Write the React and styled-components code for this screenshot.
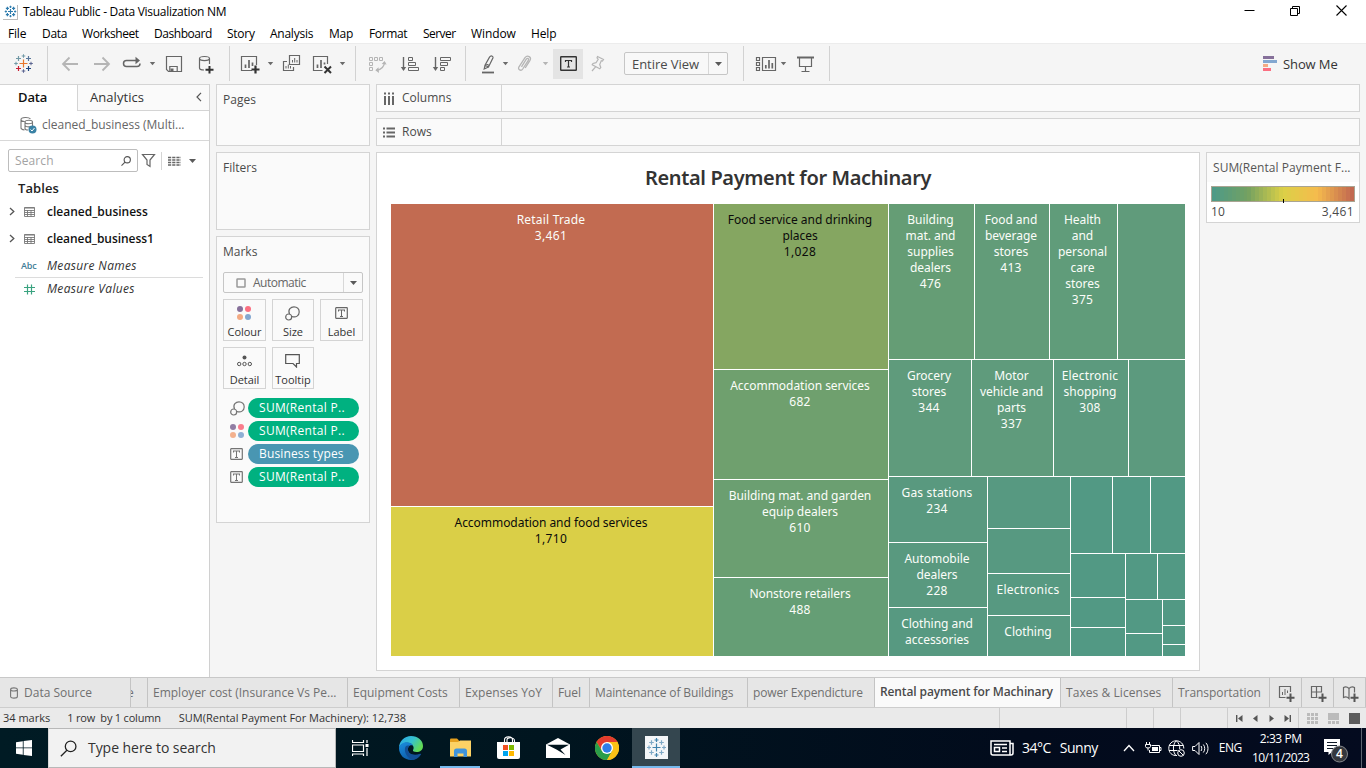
import React from 'react';
import styled, { createGlobalStyle, css } from 'styled-components';

const ui = '"Open Sans", "Noto Sans", sans-serif';
const chartFont = '"Noto Sans", "Open Sans", sans-serif';

const Global = createGlobalStyle`
  * { box-sizing: border-box; }
  body { margin: 0; background: #f5f5f5; font-family: ${ui}; font-size: 12px; color: #333; overflow: hidden; }
  svg { display: block; flex: none; }
`;

const Window = styled.div`
  width: 1366px;
  height: 768px;
  display: flex;
  flex-direction: column;
  overflow: hidden;
`;

const Text = styled.span`
  flex: none;
  white-space: pre;
  line-height: 16px;
  font-size: ${p => p.$size || 12}px;
  font-weight: ${p => (p.$bold ? 600 : 400)};
  font-style: ${p => (p.$italic ? 'italic' : 'normal')};
  letter-spacing: ${p => p.$ls || 0}px;
  color: ${p => p.$color || '#4a4a4a'};
  margin-left: ${p => p.$ml || 0}px;
`;

const Svg = ({ w, h, children, ...rest }) => (
  <svg width={w} height={h} viewBox={`0 0 ${w} ${h}`} fill="none" {...rest}>{children}</svg>
);

/* ---------- logo ---------- */
const plus = (x, y, r) => `M${x - r} ${y}H${x + r}M${x} ${y - r}V${y + r}`;
const brand = ['#e8762c', '#7199a6', '#5c6692', '#7199a6', '#5c6692', '#7199a6', '#59779b', '#c72035', '#1f447e'];
const Logo = ({ size = 21, colors = brand, weight = 1.2 }) => (
  <svg width={size} height={size} viewBox="0 0 21 21" fill="none">
    {[[10.5, 10.5, 4], [10.5, 3, 1.8], [18, 10.5, 1.8], [3, 10.5, 1.8], [10.5, 18, 1.8],
      [5.5, 5.5, 2.5], [15.5, 5.5, 2.5], [5.5, 15.5, 2.5], [15.5, 15.5, 2.5]].map(([x, y, r], i) => (
      <path key={i} d={plus(x, y, r)} stroke={colors[i % colors.length]} strokeWidth={i && i < 5 ? weight * 0.85 : weight} />
    ))}
  </svg>
);

/* ---------- title bar and menu ---------- */
const TitleBar = styled.div`
  height: 24px;
  background: #fff;
  display: flex;
  align-items: center;
  padding-left: 3px;
`;
const AppIcon = styled.div`
  width: 15px;
  height: 15px;
  display: flex;
  align-items: center;
  justify-content: center;
  border-right: 1px solid #bbb;
  border-bottom: 1px solid #bbb;
  margin-right: 5px;
`;
const Controls = styled.div`
  margin-left: auto;
  padding-right: 19px;
  display: flex;
  gap: 35px;
  margin-top: -4px;
`;
const MenuBar = styled.div`
  height: 19px;
  background: #fff;
  display: flex;
  align-items: center;
  padding: 1px 0 0 8px;
`;
const MenuItem = styled.div`
  width: ${p => p.$w}px;
  font-size: 12px;
  line-height: 18px;
  letter-spacing: ${p => p.$ls}px;
  color: #000;
  white-space: nowrap;
`;
const menus = [['File', 34, -0.2], ['Data', 40, -0.3], ['Worksheet', 72, -0.4], ['Dashboard', 73, -0.45], ['Story', 43, -0.25], ['Analysis', 59, -0.25],
  ['Map', 40, -0.2], ['Format', 54, -0.35], ['Server', 48, -0.55], ['Window', 60, -0.1], ['Help', 40, -0.15]];

/* ---------- toolbar ---------- */
const Toolbar = styled.div`
  height: 41px;
  background: #f5f5f5;
  border-top: 1px solid #ececec;
  padding-bottom: 1px;
  display: flex;
  align-items: center;
`;
const Tool = styled.div`
  flex: none;
  margin-left: ${p => p.$ml}px;
`;
const Sep = styled.div`
  flex: none;
  width: 1px;
  height: 35px;
  background: #d2d2d2;
  margin-left: ${p => p.$ml}px;
`;
const LabelButton = styled.div`
  width: 30px;
  height: 30px;
  margin-left: 4px;
  background: #e4e4e4;
  display: flex;
  align-items: center;
  justify-content: center;
`;
const Select = styled.div`
  width: ${p => p.$w}px;
  height: ${p => p.$h}px;
  border: 1px solid #c6c6c6;
  border-radius: 2px;
  background: ${p => p.$bg || '#f8f8f8'};
  display: flex;
  align-items: stretch;
  margin-left: ${p => p.$ml || 0}px;
  margin-top: ${p => p.$mt || 0}px;
  flex: none;
`;
const SelectValue = styled.div`
  flex: 1;
  display: flex;
  align-items: center;
  padding-left: ${p => p.$pl}px;
`;
const SelectArrow = styled.div`
  width: 19px;
  border-left: 1px solid #d8d8d8;
  display: flex;
  align-items: center;
  justify-content: center;
`;
const Caret = ({ ml, color = '#6b6b6b' }) => (
  <Tool $ml={ml}><Svg w={7} h={21}><path d="M.8 9H6.2L3.5 12.2Z" fill={color} /></Svg></Tool>
);
const DownArrow = () => <Svg w={7} h={4}><path d="M0 0H7L3.5 4Z" fill="#5a5a5a" /></Svg>;

const dark = '#666';
const pale = '#b5b5b5';

const Back = () => <Svg w={18} h={21}><path d="M17 11H2M8.5 4.500L2 11L8.500 17.500" stroke={pale} strokeWidth="1.800" /></Svg>;
const Forward = () => <Svg w={18} h={21}><path d="M1 11H16M9.500 4.500L16 11L9.500 17.500" stroke={pale} strokeWidth="1.800" /></Svg>;
const Replay = () => (
  <Svg w={20} h={21}>
    <path d="M4.500 7.500C2.500 7.500 1.500 9 1.500 10.500C1.500 12.300 2.800 13.500 4.500 13.500H15C17 13.500 18 12 18 10.500M4.500 7.500H14" stroke={dark} strokeWidth="1.500" />
    <path d="M13.500 3.800V11.200L18 7.500Z" fill={dark} />
  </Svg>
);
const Save = () => (
  <Svg w={18} h={21}>
    <path d="M1.500 3.500H16.500V18.500H3.500L1.500 16.500ZM4.800 18.500V13.500H12.200V18.500" stroke={dark} strokeWidth="1.200" />
    <path d="M5.500 15.500H8.500V18.500H5.500Z" fill={dark} />
  </Svg>
);
const Database = () => (
  <Svg w={17} h={21}>
    <path d="M11.500 11V5.500M1.500 5.500V15C1.500 16.500 3.500 17 6 17M1.500 5.500C1.500 2.800 11.500 2.800 11.500 5.500S1.500 8.200 1.500 5.500" stroke={dark} strokeWidth="1.200" />
    <path d="M11.500 13V20.500M7.500 16.700H15.500" stroke="#333" strokeWidth="2" />
  </Svg>
);
const NewSheet = () => (
  <Svg w={21} h={21}>
    <path d="M12 17.500H1.500V3.500H16.500V12" stroke={dark} strokeWidth="1.200" />
    <path d="M5.500 15V11.500M9 15V7M12.500 13V9.500" stroke={dark} strokeWidth="1.700" />
    <path d="M15.500 12.500V20.500M11.500 16.500H19.500" stroke="#333" strokeWidth="2.200" />
  </Svg>
);
const Duplicate = () => (
  <Svg w={19} h={21}>
    <path d="M7.500 2.500H17.500V11.500H7.500ZM5 8.500H1.500V17.500H11.500V14" stroke={dark} strokeWidth="1.200" />
    <path d="M10.500 9.500V7M12.700 9.500V5M15 9.500V7M4 15.500V13M6.300 15.500V11.500M8.500 15.500V13" stroke={dark} />
  </Svg>
);
const ClearSheet = () => (
  <Svg w={21} h={21}>
    <path d="M10.500 17.500H1.500V3.500H15.500V11" stroke={dark} strokeWidth="1.200" />
    <path d="M5.500 15V11.500M9 15V7M12.500 11.500V9.500" stroke={dark} strokeWidth="1.700" />
    <path d="M12.500 13.500L19 20M19 13.500L12.500 20" stroke="#333" strokeWidth="2" />
  </Svg>
);
const Swap = () => (
  <Svg w={19} h={21} stroke={pale}>
    <path d="M1.500 4.500H4.500V7.500H1.500ZM6.500 4.500H9.500V7.500H6.500ZM11.500 4.500H14.500V7.500H11.500ZM1.500 9.500H4.500V12.500H1.500ZM1.500 14.500H4.500V17.500H1.500Z" />
    <path d="M16.500 9C16.500 13 13.500 17 8.500 17.300" strokeWidth="1.300" />
    <path d="M13.700 11L16.600 8L18.600 11.500ZM10.500 14.300L7.300 17.300L11 20Z" fill={pale} stroke="none" />
  </Svg>
);
const SortAsc = () => (
  <Svg w={20} h={21} stroke={dark}>
    <path d="M3.500 4V16" strokeWidth="1.400" /><path d="M.8 14H6.200L3.500 18Z" fill={dark} stroke="none" />
    <path d="M8.500 4.500H12.500V7.500H8.500ZM8.500 9.500H15.500V12.500H8.500ZM8.500 14.500H18.500V17.500H8.500Z" />
  </Svg>
);
const SortDesc = () => (
  <Svg w={20} h={21} stroke={dark}>
    <path d="M3.500 4V16" strokeWidth="1.400" /><path d="M.8 14H6.200L3.500 18Z" fill={dark} stroke="none" />
    <path d="M8.500 4.500H18.500V7.500H8.500ZM8.500 9.500H15.500V12.500H8.500ZM8.500 14.500H12.500V17.500H8.500Z" />
  </Svg>
);
const Highlighter = () => (
  <Svg w={14} h={21}>
    <path d="M9.500 3.200C10.500 2.500 12.300 3.500 12 4.700L7.500 14L4 12.300L8.500 4.200ZM4 12.300L3.200 16L7.500 14M4.800 10.800L8.300 12.500" stroke={dark} strokeWidth="1.200" />
    <path d="M1 19.500H13" stroke={dark} strokeWidth="1.800" />
  </Svg>
);
const Clip = () => (
  <Svg w={15} h={21}>
    <path d="M4.500 13.800L9.300 6.200C10.500 4.500 12.300 5.700 11.300 7.300L5.700 16C4 18.500 .5 16.500 2 13.800L8 4.700C10.500 1.500 14.800 4 13 7.300L8.200 15" stroke={pale} strokeWidth="1.300" />
  </Svg>
);
const LabelIcon = ({ w = 17, h = 15, color = '#333', weight = 1.4 }) => (
  <Svg w={w} h={h} stroke={color}>
    <rect x=".7" y=".7" width={w - 1.4} height={h - 1.4} rx=".5" strokeWidth={weight} />
    <path d={`M${w / 2 - 3} ${h / 2 - 1.5}V${h / 2 - 3}H${w / 2 + 3}V${h / 2 - 1.5}M${w / 2} ${h / 2 - 3}V${h / 2 + 3.5}M${w / 2 - 1.5} ${h / 2 + 3.5}H${w / 2 + 1.5}`} strokeWidth={weight * 0.85} />
  </Svg>
);
const Pin = () => (
  <Svg w={15} h={21}>
    <path d="M7.500 3.500L13.500 6.500L12.500 8L11.300 7.700L9.700 11.500L10.800 14.500L9.800 15.800L2.200 11.800L3 10.500L6 9.700L8.200 6.200L7 4.800ZM5.800 13.700L2 18" stroke={pale} strokeWidth="1.200" />
  </Svg>
);
const Cards = () => (
  <Svg w={22} h={21} stroke={dark}>
    <path d="M1.500 4.500H4.500V7.500H1.500ZM1.500 9.500H4.500V12.500H1.500ZM1.500 14.500H4.500V17.500H1.500ZM7.500 4.500H20.500V17.500H7.500Z" strokeWidth="1.200" />
    <path d="M10.800 15.500V12M14 15.500V7M17.300 15.500V10" strokeWidth="1.700" />
  </Svg>
);
const Present = () => (
  <Svg w={19} h={21} stroke={dark}>
    <path d="M1 4.500H18" strokeWidth="2" /><path d="M3.500 5V13.500H15.500V5M9.500 13.500V18M5.500 18.500H13.500" strokeWidth="1.200" />
  </Svg>
);
const ShowMeIcon = () => (
  <Svg w={15} h={15}>
    <path d="M0 0H11V3H0Z" fill="#86709a" /><path d="M0 4H14V7H0Z" fill="#83a7d0" />
    <path d="M0 8H5V11H0Z" fill="#f3aa83" /><path d="M0 12H8V15H0Z" fill="#fb6f81" />
  </Svg>
);

/* ---------- body ---------- */
const Body = styled.div`
  height: 593px;
  display: flex;
  background: #f5f5f5;
`;
const DataPane = styled.div`
  width: 210px;
  background: #fff;
  border-right: 1px solid #d0d0d0;
  border-top: 1px solid #d4d4d4;
  margin-right: 6px;
`;
const PaneTabs = styled.div`
  height: 26px;
  display: flex;
`;
const PaneTab = styled.div`
  display: flex;
  align-items: center;
  width: ${p => p.$w}px;
  padding: 0 7px ${p => (p.$active ? 2 : 1)}px ${p => p.$pl}px;
  ${p => !p.$active && css`
    background: #fafafa;
    border-left: 1px solid #d4d4d4;
    border-bottom: 1px solid #d4d4d4;
    justify-content: space-between;
  `}
`;
const SourceRow = styled.div`
  height: 30px;
  padding: 0 0 1px 20px;
  border-bottom: 1px solid #d8d8d8;
  display: flex;
  align-items: center;
`;
const SearchRow = styled.div`
  height: 39px;
  display: flex;
  align-items: center;
  padding-left: 8px;
`;
const SearchBox = styled.div`
  width: 130px;
  height: 23px;
  border: 1px solid #bdbdbd;
  border-radius: 2px;
  display: flex;
  align-items: center;
  justify-content: space-between;
  padding: 0 6px 0 6px;
  margin-right: 3px;
`;
const Divider = styled.div`
  width: 1px;
  height: 18px;
  background: #d4d4d4;
  margin: 0 6px 0 5px;
`;
const ListOptions = styled.div`
  display: flex;
  align-items: center;
  gap: 8px;
`;
const TablesHeading = styled.div`
  height: 18px;
  padding-left: 18px;
`;
const FieldRow = styled.div`
  height: ${p => p.$h}px;
  margin: 0 6px 0 ${p => p.$ml}px;
  padding-top: ${p => p.$pt || 0}px;
  display: flex;
  align-items: center;
  ${p => p.$line && css`border-bottom: 1px solid #dcdcdc;`}
`;
const FieldIcon = styled.div`
  width: ${p => p.$w}px;
  flex: none;
  display: flex;
`;

const Shelves = styled.div`
  width: 154px;
  margin-right: 6px;
  display: flex;
  flex-direction: column;
  gap: 6px;
`;
const Card = styled.div`
  height: ${p => p.$h}px;
  border: 1px solid #d4d4d4;
  background: #fafafa;
  padding: 6px 6px 0;
`;
const MarkGrid = styled.div`
  display: grid;
  grid-template-columns: 43px 42px 43px;
  grid-auto-rows: 42px;
  gap: 6px;
  margin-top: 6px;
`;
const MarkButton = styled.div`
  border: 1px solid #d4d4d4;
  background: #fafafa;
  display: flex;
  flex-direction: column;
  align-items: center;
`;
const MarkGlyph = styled.div`
  height: 24px;
  padding: 2px 1px 0 0;
  display: flex;
  align-items: center;
`;
const Pills = styled.div`
  margin-top: 9px;
  display: flex;
  flex-direction: column;
  gap: 3px;
`;
const PillRow = styled.div`
  height: 20px;
  padding-left: 7px;
  display: flex;
  align-items: center;
`;
const PillIcon = styled.div`
  width: 18px;
  opacity: .9;
`;
const Pill = styled.div`
  width: 111px;
  height: 20px;
  border-radius: 10px;
  background: ${p => p.$bg};
  padding-left: 11px;
  display: flex;
  align-items: center;
`;

const Main = styled.div`
  width: 984px;
  display: flex;
  flex-direction: column;
  gap: 6px;
`;
const Shelf = styled.div`
  height: 28px;
  border: 1px solid #d4d4d4;
  background: #fafafa;
  display: flex;
`;
const ShelfLabel = styled.div`
  width: 125px;
  border-right: 1px solid #d4d4d4;
  padding-left: 6px;
  display: flex;
  align-items: center;
`;
const ViewRow = styled.div`
  display: flex;
  gap: 6px;
  align-items: flex-start;
`;
const Sheet = styled.div`
  width: 824px;
  height: 519px;
  background: #fff;
  border: 1px solid #d4d4d4;
  padding-left: 14px;
`;
const SheetTitle = styled.div`
  width: 794px;
  height: 51px;
  font: 600 20px/50px ${chartFont};
  letter-spacing: -.37px;
  color: #333;
  text-align: center;
`;
const Split = styled.div`
  display: flex;
  flex-direction: ${p => (p.$col ? 'column' : 'row')};
  gap: 1px;
  flex: none;
  ${p => p.$w && css`width: ${p.$w}px;`}
  ${p => p.$h && css`height: ${p.$h}px;`}
`;
const Cell = styled.div`
  flex: none;
  width: ${p => (p.$w ? p.$w + 'px' : 'auto')};
  height: ${p => (p.$h ? p.$h + 'px' : 'auto')};
  background: ${p => p.$bg};
  color: ${p => (p.$dark ? '#0b0b0b' : '#fbfdf9')};
  padding: 8px 2px 0 0;
  font: 12px/16px ${chartFont};
  text-align: center;
  white-space: nowrap;
`;
const Line = styled.div`
  letter-spacing: ${p => p.$ls}px;
`;
const spacing = { 'Retail Trade': 0.2, 'Electronics': 0.2, 'Electronic': 0.15, 'Gas stations': 0.15 };
const Block = ({ lines = [], ...rest }) => (
  <Cell {...rest}>
    {lines.map((l, i) => <Line key={i} $ls={spacing[l] !== undefined ? spacing[l] : /^\d/.test(l) ? 0.35 : -0.04}>{l}</Line>)}
  </Cell>
);

const Legend = styled.div`
  width: 154px;
  height: 71px;
  background: #fff;
  border: 1px solid #d4d4d4;
`;
const LegendTitle = styled.div`
  height: 29px;
  background: #fafafa;
  padding: 6px 0 0 6px;
`;
const Ramp = styled.div`
  width: 144px;
  height: 16px;
  margin: 4px 0 0 4px;
  border: 1px solid #a9a492;
  display: flex;
  position: relative;
`;
const Step = styled.div`
  flex: 1;
`;
const Tick = styled.div`
  position: absolute;
  left: 71px;
  top: 12px;
  width: 1px;
  height: 4px;
  background: #000;
`;
const LegendRange = styled.div`
  display: flex;
  justify-content: space-between;
  padding: 2px 5px 0 4px;
`;
const rampStops = [[78, 154, 134], [116, 161, 97], [220, 208, 71], [245, 187, 77], [194, 105, 80]];
const rampColor = t => {
  const s = Math.min(3, Math.floor(t * 4));
  const k = t * 4 - s;
  return `rgb(${rampStops[s].map((v, i) => Math.round(v + (rampStops[s + 1][i] - v) * k)).join(',')})`;
};

/* small icons */
const SourceIcon = () => (
  <Svg w={17} h={18}>
    <path d="M1 3.500V12C1 13 2.500 13.700 4.500 14M1 3.500C1 1 9 1 10.500 3M1 3.500C1 5 3 5.500 4.500 5.500M12.500 10.500V6C12.500 3.700 5 3.700 5 6S12.500 8.300 12.500 6M5 6V12.500C5 13.500 6.500 14 8 14M5 9.500C6 10.700 9 11 11 10.500" stroke="#777" strokeWidth="1.100" />
    <circle cx="12.500" cy="13.500" r="4" fill="#3a82a5" /><path d="M10.500 13.500L12 15L14.500 12" stroke="#fff" />
  </Svg>
);
const Search = ({ size, color, weight }) => (
  <svg width={size} height={size} viewBox="0 0 16 16" fill="none" stroke={color} strokeWidth={weight}>
    <circle cx="10" cy="6" r="5" /><path d="M6.500 9.700L.8 15.300" />
  </svg>
);
const TableIcon = () => (
  <Svg w={11} h={10}><path d="M.5 .5H10.500V9.500H.5ZM.5 3.500H10.500M.5 5.500H10.500M.5 7.500H10.500M3.500 3V9.500M7 3V9.500" stroke="#777" strokeWidth=".9" /><path d="M.5 1H10.500" stroke="#777" /></Svg>
);
const Chevron = () => <Svg w={6} h={9}><path d="M1 1L4.800 4.500L1 8" stroke="#555" strokeWidth="1.300" /></Svg>;
const Dots = () => (
  <Svg w={14} h={14}><circle cx="3" cy="3" r="3" fill="#86709a" /><circle cx="11" cy="3" r="3" fill="#fb6f81" /><circle cx="3" cy="11" r="3" fill="#f3aa83" /><circle cx="11" cy="11" r="3" fill="#83a7d0" /></Svg>
);
const SizeIcon = () => (
  <Svg w={15} h={15} stroke="#666" strokeWidth="1.200"><path d="M4.500 8C2.500 3.500 6 .8 9 .8C12 .8 14.200 3 14.200 6C14.200 9.500 11 12 7 10.500" /><circle cx="3.700" cy="11" r="3" /></Svg>
);
const DetailIcon = () => (
  <Svg w={15} h={12}><circle cx="7.500" cy="2.500" r="2" fill="#555" /><circle cx="2.200" cy="9" r="1.700" stroke="#555" /><circle cx="7.500" cy="9" r="1.700" stroke="#555" /><circle cx="12.800" cy="9" r="1.700" stroke="#555" /></Svg>
);
const TooltipIcon = () => <Svg w={15} h={14}><path d="M.7 .7H14.300V9.500H11.500V13L8 9.500H.7Z" stroke="#555" strokeWidth="1.200" /></Svg>;
const SmallLabel = () => <LabelIcon w={13} h={12} color="#666" weight={1.2} />;

const markButtons = [['Colour', Dots], ['Size', SizeIcon], ['Label', SmallLabel], ['Detail', DetailIcon], ['Tooltip', TooltipIcon]];
const pills = [['SUM(Rental P..', SizeIcon, '#00b180', 0.3], ['SUM(Rental P..', Dots, '#00b180', 0.3], ['Business types', SmallLabel, '#4996b2', 0.15], ['SUM(Rental P..', SmallLabel, '#00b180', 0.3]];

/* ---------- sheet tabs & status ---------- */
const TabBar = styled.div`
  height: 31px;
  background: #e6e6e6;
  border-top: 1px solid #c8c8c8;
  border-bottom: 1px solid #cdcdcd;
  display: flex;
`;
const SheetTab = styled.div`
  flex: none;
  width: ${p => p.$w}px;
  border-right: 1px solid #c4c4c4;
  padding: ${p => (p.$active ? '0 0 2px' : '1px 0 0')};
  padding-left: ${p => (p.$pl === undefined ? 5 : p.$pl)}px;
  background: ${p => (p.$active ? '#fafafa' : '#e6e6e6')};
  display: flex;
  align-items: center;
  overflow: hidden;
`;
const StatusBar = styled.div`
  height: 20px;
  background: #eaeaea;
  display: flex;
  align-items: center;
  padding-left: 3px;
`;
const StatusCells = styled.div`
  margin-left: auto;
  display: flex;
  height: 20px;
`;
const StatusCell = styled.div`
  width: ${p => p.$w}px;
  border-left: 1px solid #cdcdcd;
  display: flex;
  align-items: center;
  justify-content: space-between;
  padding: 0 ${p => p.$pr || 0}px 0 ${p => p.$pl || 0}px;
`;
const tabs = [['Employer cost (Insurance Vs Pe...', 200, 0], ['Equipment Costs', 112, 0], ['Expenses YoY', 93, 0.05], ['Fuel', 37, -0.1], ['Maintenance of Buildings', 158, -0.13],
  ['power Expendicture', 127, -0.14], ['Rental payment for Machinary', 186, -0.12, true], ['Taxes & Licenses', 112, 0.06], ['Transportation', 97, -0.05]];

/* ---------- taskbar ---------- */
const Taskbar = styled.div`
  height: 40px;
  background: linear-gradient(90deg, #001b24 0, #00151f 40%, #020b1c 75%, #040b1f 100%);
  display: flex;
  color: #fff;
`;
const TaskCell = styled.div`
  flex: none;
  width: ${p => p.$w}px;
  display: flex;
  align-items: center;
  justify-content: center;
  background: ${p => (p.$active ? '#34464f' : 'transparent')};
`;
const Running = styled.div`
  width: ${p => p.$w}px;
  height: 40px;
  border-bottom: 2px solid #76b9ed;
  padding-top: 1px;
  display: flex;
  align-items: center;
  justify-content: center;
`;
const TaskSearch = styled.div`
  width: 288px;
  background: #f2f2f2;
  border: 1px solid #b8b8b8;
  border-left-color: #d8d8d8;
  display: flex;
  align-items: center;
  padding-left: 11px;
`;
const Tray = styled.div`
  margin-left: auto;
  width: 376px;
  display: flex;
  align-items: center;
`;
const TrayIcon = styled.div`
  flex: none;
  margin-left: ${p => p.$ml}px;
  margin-top: ${p => p.$mt || 0}px;
`;
const Clock = styled.div`
  width: 58px;
  margin-left: 10px;
  display: flex;
  flex-direction: column;
  align-items: center;
  gap: 3px;
`;
const ShowDesktop = styled.div`
  width: 1px;
  height: 40px;
  background: #5c6470;
  margin-left: 12px;
`;

const AddPlus = <path d="M12.500 9.500V18M8.500 13.700H16.500" stroke="#555" strokeWidth="2" />;

export default function App() {
  const red = '#c26b51', g1 = '#5f9b7c', g2 = '#5c9a7e', g3 = '#579981', g4 = '#529984';
  return (
    <Window>
      <Global />
      <TitleBar>
        <AppIcon><Logo size={13} colors={['#2f7cae']} weight={1.9} /></AppIcon>
        <Text $ls={-0.28} $color="#000">Tableau Public - Data Visualization NM</Text>
        <Controls>
          <Svg w={11} h={11}><path d="M.5 5.500H10.500" stroke="#000" /></Svg>
          <Svg w={11} h={11}><path d="M.5 3.500H7.500V10.500H.5ZM2.500 3.500V1.500H9.500V8.500H7.500" stroke="#000" /></Svg>
          <Svg w={11} h={11}><path d="M.5 .5L10.500 10.500M10.500 .5L.5 10.500" stroke="#000" strokeWidth="1.100" /></Svg>
        </Controls>
      </TitleBar>
      <MenuBar>{menus.map(([n, w, ls]) => <MenuItem key={n} $w={w} $ls={ls}>{n}</MenuItem>)}</MenuBar>

      <Toolbar>
        <Tool $ml={13}><Logo /></Tool>
        <Sep $ml={13} />
        <Tool $ml={13}><Back /></Tool>
        <Tool $ml={14}><Forward /></Tool>
        <Tool $ml={11}><Replay /></Tool>
        <Caret ml={7} />
        <Tool $ml={9}><Save /></Tool>
        <Tool $ml={15}><Database /></Tool>
        <Sep $ml={14} />
        <Tool $ml={10}><NewSheet /></Tool>
        <Caret ml={6} />
        <Tool $ml={8}><Duplicate /></Tool>
        <Tool $ml={11}><ClearSheet /></Tool>
        <Caret ml={6} />
        <Sep $ml={9} />
        <Tool $ml={12}><Swap /></Tool>
        <Tool $ml={13}><SortAsc /></Tool>
        <Tool $ml={12}><SortDesc /></Tool>
        <Sep $ml={13} />
        <Tool $ml={15}><Highlighter /></Tool>
        <Caret ml={7} />
        <Tool $ml={8}><Clip /></Tool>
        <Caret ml={10} color={pale} />
        <LabelButton><LabelIcon /></LabelButton>
        <Tool $ml={7}><Pin /></Tool>
        <Select $w={104} $h={23} $ml={19}>
          <SelectValue $pl={7}><Text $size={13} $ls={-0.05}>Entire View</Text></SelectValue>
          <SelectArrow><DownArrow /></SelectArrow>
        </Select>
        <Sep $ml={15} />
        <Tool $ml={11}><Cards /></Tool>
        <Caret ml={3} />
        <Tool $ml={9}><Present /></Tool>
        <Sep $ml={14} />
        <Tool $ml={433}><ShowMeIcon /></Tool>
        <Text $ml={5} $size={13} $ls={-0.1} $color="#333">Show Me</Text>
      </Toolbar>

      <Body>
        <DataPane>
          <PaneTabs>
            <PaneTab $active $w={77} $pl={18}><Text $bold $size={13} $ls={-0.15} $color="#111">Data</Text></PaneTab>
            <PaneTab $w={132} $pl={12}>
              <Text $size={13} $color="#333" $ls={0.05}>Analytics</Text>
              <Svg w={6} h={10}><path d="M5 .8L1 5L5 9.200" stroke="#555" strokeWidth="1.200" /></Svg>
            </PaneTab>
          </PaneTabs>
          <SourceRow><SourceIcon /><Text $ml={5} $color="#666">cleaned_business (Multi...</Text></SourceRow>
          <SearchRow>
            <SearchBox><Text $color="#a3a3a3" $ls={0.1}>Search</Text><Search size={10} color="#555" weight={1.8} /></SearchBox>
            <Svg w={15} h={15}><path d="M1.500 1.500H13.500L9 7V13.500L6 11.500V7Z" stroke="#666" strokeWidth="1.200" /></Svg>
            <Divider />
            <ListOptions>
              <Svg w={13} h={10}><path d="M0 1.500H13M0 4H13M0 6.500H13M0 9H13" stroke="#666" strokeWidth="1.300" strokeDasharray="3.200 1" /></Svg>
              <DownArrow />
            </ListOptions>
          </SearchRow>
          <TablesHeading><Text $bold $size={13} $ls={0.1} $color="#222">Tables</Text></TablesHeading>
          <FieldRow $h={27} $ml={9}><FieldIcon $w={15}><Chevron /></FieldIcon><FieldIcon $w={23}><TableIcon /></FieldIcon><Text $bold $color="#111">cleaned_business</Text></FieldRow>
          <FieldRow $h={27} $ml={9}><FieldIcon $w={15}><Chevron /></FieldIcon><FieldIcon $w={23}><TableIcon /></FieldIcon><Text $bold $ls={-0.05} $color="#111">cleaned_business1</Text></FieldRow>
          <FieldRow $h={26} $ml={15} $pt={2} $line><FieldIcon $w={32}><Text $ml={6} $size={9} $bold $color="#3f7d97" $ls={-0.1}>Abc</Text></FieldIcon><Text $italic $color="#333" $ls={0.33}>Measure Names</Text></FieldRow>
          <FieldRow $h={22} $ml={24}>
            <FieldIcon $w={23}><Svg w={11} h={11}><path d="M3.500 .5V10.500M7.500 .5V10.500M0 3.500H11M0 7.500H11" stroke="#3aa380" strokeWidth="1.200" /></Svg></FieldIcon>
            <Text $italic $color="#333" $ls={0.33}>Measure Values</Text>
          </FieldRow>
        </DataPane>

        <Shelves>
          <Card $h={62}><Text>Pages</Text></Card>
          <Card $h={78}><Text>Filters</Text></Card>
          <Card $h={287}>
            <Text>Marks</Text>
            <Select $w={140} $h={21} $bg="#fafafa" $mt={12}>
              <SelectValue $pl={12}>
                <Svg w={10} h={10}><rect x="1" y="1" width="8" height="8" rx=".5" stroke="#999" strokeWidth="1.500" /></Svg>
                <Text $ml={7} $ls={-0.5} $color="#666">Automatic</Text>
              </SelectValue>
              <SelectArrow><DownArrow /></SelectArrow>
            </Select>
            <MarkGrid>
              {markButtons.map(([name, Icon]) => (
                <MarkButton key={name}><MarkGlyph><Icon /></MarkGlyph><Text $size={11} $color="#333" $ls={-0.03}>{name}</Text></MarkButton>
              ))}
            </MarkGrid>
            <Pills>
              {pills.map(([name, Icon, bg, ls], i) => (
                <PillRow key={i}><PillIcon><Icon /></PillIcon><Pill $bg={bg}><Text $color="#fff" $ls={ls}>{name}</Text></Pill></PillRow>
              ))}
            </Pills>
          </Card>
        </Shelves>

        <Main>
          <Shelf><ShelfLabel>
            <Svg w={12} h={13}><path d="M2 4V13M6 4V13M10 4V13M2 .5V2.500M6 .5V2.500M10 .5V2.500" stroke="#666" strokeWidth="2" /></Svg>
            <Text $ml={7}>Columns</Text>
          </ShelfLabel></Shelf>
          <Shelf><ShelfLabel>
            <Svg w={12} h={11}><path d="M3.500 1.500H12M3.500 5.500H12M3.500 9.500H12M0 1.500H2M0 5.500H2M0 9.500H2" stroke="#666" strokeWidth="2" /></Svg>
            <Text $ml={7}>Rows</Text>
          </ShelfLabel></Shelf>
          <ViewRow>
            <Sheet>
              <SheetTitle>Rental Payment for Machinary</SheetTitle>
              <Split>
                <Split $col $w={322}>
                  <Block $h={302} $bg={red} lines={['Retail Trade', '3,461']} />
                  <Block $h={149} $bg="#dacf47" $dark lines={['Accommodation and food services', '1,710']} />
                </Split>
                <Split $col $w={174}>
                  <Block $h={165} $bg="#85a661" $dark lines={['Food service and drinking', 'places', '1,028']} />
                  <Block $h={109} $bg="#6fa06e" lines={['Accommodation services', '682']} />
                  <Block $h={97} $bg="#6b9f71" lines={['Building mat. and garden', 'equip dealers', '610']} />
                  <Block $h={78} $bg="#659e75" lines={['Nonstore retailers', '488']} />
                </Split>
                <Split $col $w={296}>
                  <Split $h={155}>
                    <Block $w={85} $bg="#659d75" lines={['Building', 'mat. and', 'supplies', 'dealers', '476']} />
                    <Block $w={74} $bg="#629c79" lines={['Food and', 'beverage', 'stores', '413']} />
                    <Block $w={67} $bg="#609c7a" lines={['Health', 'and', 'personal', 'care', 'stores', '375']} />
                    <Block $w={67} $bg="#609b7b" />
                  </Split>
                  <Split $h={116}>
                    <Block $w={82} $bg={g1} lines={['Grocery', 'stores', '344']} />
                    <Block $w={81} $bg={g1} lines={['Motor', 'vehicle and', 'parts', '337']} />
                    <Block $w={74} $bg={g2} lines={['Electronic', 'shopping', '308']} />
                    <Block $w={56} $bg={g2} />
                  </Split>
                  <Split $h={179}>
                    <Split $col $w={98}>
                      <Block $h={65} $bg="#59997f" lines={['Gas stations', '234']} />
                      <Block $h={64} $bg="#59997f" lines={['Automobile', 'dealers', '228']} />
                      <Block $h={48} $bg={g3} lines={['Clothing and', 'accessories']} />
                    </Split>
                    <Split $col $w={82}>
                      <Block $h={51} $bg={g3} />
                      <Block $h={44} $bg={g3} />
                      <Block $h={41} $bg={g3} lines={['Electronics']} />
                      <Block $h={40} $bg={g3} lines={['Clothing']} />
                    </Split>
                    <Split $col $w={114}>
                      <Split $h={76}>
                        <Block $w={41} $bg={g4} /><Block $w={37} $bg={g4} /><Block $w={34} $bg={g4} />
                      </Split>
                      <Split $h={102}>
                        <Split $col $w={54}>
                          <Block $h={43} $bg={g4} /><Block $h={29} $bg={g4} /><Block $h={28} $bg={g4} />
                        </Split>
                        <Split $col $w={59}>
                          <Split $h={45}><Block $w={31} $bg={g4} /><Block $w={27} $bg={g4} /></Split>
                          <Split $h={56}>
                            <Split $col $w={36}><Block $h={33} $bg={g4} /><Block $h={22} $bg={g4} /></Split>
                            <Split $col $w={22}><Block $h={25} $bg={g4} /><Block $h={18} $bg={g4} /><Block $h={11} $bg={g4} /></Split>
                          </Split>
                        </Split>
                      </Split>
                    </Split>
                  </Split>
                </Split>
              </Split>
            </Sheet>
            <Legend>
              <LegendTitle><Text $ls={0.05} $color="#555">SUM(Rental Payment F...</Text></LegendTitle>
              <Ramp>
                {Array.from({ length: 36 }, (_, i) => <Step key={i} style={{ background: rampColor(i / 35) }} />)}
                <Tick />
              </Ramp>
              <LegendRange><Text $ls={0.1}>10</Text><Text $ls={0.35}>3,461</Text></LegendRange>
            </Legend>
          </ViewRow>
        </Main>
      </Body>

      <TabBar>
        <SheetTab $w={131} $pl={10}>
          <Svg w={8} h={12}><path d="M.6 2.500C.6 .3 7.400 .3 7.400 2.500V9.500C7.400 11.700 .6 11.700 .6 9.500ZM.6 2.500C.6 4.500 7.400 4.500 7.400 2.500" stroke="#777" strokeWidth="1.100" /></Svg>
          <Text $ml={6} $color="#707070">Data Source</Text>
        </SheetTab>
        <SheetTab $w={17} $pl={0}><Text $ml={-4} $color="#707070">e</Text></SheetTab>
        {tabs.map(([name, w, ls, active]) => (
          <SheetTab key={name} $w={w} $active={active}><Text $bold={active} $ls={ls} $color={active ? '#4a4a4a' : '#707070'}>{name}</Text></SheetTab>
        ))}
        <SheetTab $w={32} $pl={8}><Svg w={17} h={19}><path d="M7.500 13.500H1.500V2.500H12.500V8" stroke="#666" strokeWidth="1.200" /><path d="M4.500 11V8M7 11V5M9.500 9V6.500" stroke="#666" />{AddPlus}</Svg></SheetTab>
        <SheetTab $w={32} $pl={8}><Svg w={17} h={19}><path d="M7.500 13.500H1.500V2.500H11.500V8.500M6.500 2.500V13.500M1.500 8H11" stroke="#666" strokeWidth="1.200" />{AddPlus}</Svg></SheetTab>
        <SheetTab $w={32} $pl={8}><Svg w={17} h={19}><path d="M7 4.500C5.500 3 3.500 2.500 1.500 3.500V13.500C3.500 12.500 5.500 13 7 14.500V4.500C8.500 3 10.500 2.500 12.500 3.500V8.500" stroke="#666" strokeWidth="1.200" />{AddPlus}</Svg></SheetTab>
      </TabBar>

      <StatusBar>
        <Text $size={11} $color="#333">34 marks</Text>
        <Text $size={11} $color="#333" $ml={17} $ls={-0.2}>1 row  by 1 column</Text>
        <Text $size={11} $color="#333" $ml={18}>SUM(Rental Payment For Machinery): 12,738</Text>
        <StatusCells>
          <StatusCell $w={127} /><StatusCell $w={27} /><StatusCell $w={27} /><StatusCell $w={47} />
          <StatusCell $w={71} $pl={8} $pr={7}>
            <Svg w={7} h={7}><path d="M.7 0V7" stroke="#555" strokeWidth="1.400" /><path d="M6.500 0V7L2 3.500Z" fill="#555" /></Svg>
            <Svg w={5} h={7}><path d="M4.500 0V7L0 3.500Z" fill="#555" /></Svg>
            <Svg w={5} h={7}><path d="M.5 0V7L5 3.500Z" fill="#555" /></Svg>
            <Svg w={7} h={7}><path d="M6.300 0V7" stroke="#555" strokeWidth="1.400" /><path d="M.5 0V7L5 3.500Z" fill="#555" /></Svg>
          </StatusCell>
          <StatusCell $w={68} $pl={8} $pr={6}>
            <Svg w={11} h={11}><path d="M0 1.500H11M0 5.500H11M0 9.500H11" stroke="#bbb" strokeWidth="3" strokeDasharray="3 1" /></Svg>
            <Svg w={11} h={11}><path d="M0 0H11V7H0Z" fill="#bbb" /><path d="M0 9.500H11" stroke="#bbb" strokeWidth="3" strokeDasharray="3 1" /></Svg>
            <Svg w={11} h={11}><path d="M0 0H11V11H0Z" fill="#5c5c5c" /></Svg>
          </StatusCell>
        </StatusCells>
      </StatusBar>

      <Taskbar>
        <TaskCell $w={48}><Svg w={16} h={16}><path d="M0 2.200L6.800 1.200V7.500H0ZM7.600 1.100L16 0V7.500H7.600ZM0 8.300H6.800V14.700L0 13.800ZM7.600 8.300H16V16L7.600 14.900Z" fill="#fff" /></Svg></TaskCell>
        <TaskSearch><Search size={17} color="#222" weight={1.2} /><Text $ml={11} $size={14} $ls={-0.05} $color="#333">Type here to search</Text></TaskSearch>
        <TaskCell $w={49}>
          <Svg w={17} h={16} stroke="#fff"><path d="M.5 0V2.500H11.500V0M.5 5H11.500V11.500H.5ZM.5 16V14H11.500V16M15 0V3M15 8V16" strokeWidth="1.200" /><path d="M13.500 4H16.500V7H13.500Z" fill="#fff" stroke="none" /></Svg>
        </TaskCell>
        <TaskCell $w={52}>
          <Svg w={24} h={24}>
            <defs>
              <linearGradient id="edgeTop" x1="0" y1="0" x2="1" y2=".5"><stop offset="0" stopColor="#2aa5e8" /><stop offset=".55" stopColor="#35c1d0" /><stop offset="1" stopColor="#62da55" /></linearGradient>
              <linearGradient id="edgeLow" x1="0" y1="0" x2=".6" y2="1"><stop offset="0" stopColor="#1b8fe0" /><stop offset="1" stopColor="#0c59a4" /></linearGradient>
            </defs>
            <path d="M0 12C0 5 5.500 0 12 0C19 0 24 4.500 24 10C24 14 21 16 17.500 16C15 16 13.500 15 14 14C15.500 12 14.500 8 10 7C5 6 1 9 0 12Z" fill="url(#edgeTop)" />
            <path d="M0 12C.5 8.500 4 6 8 6.200C12 6.400 14 8.500 14 9.500C10 8.500 8.500 11.500 9 14.500C10 19 16 21 21.500 18C19.500 22 15.500 24 12 24C5.500 24 0 19 0 12Z" fill="url(#edgeLow)" />
            <path d="M7 10C4.500 13 6 21 13.500 24C18 23.500 20.500 21 22 18.500C22.200 17.700 21.500 17.500 21 17.800C15 20 9.500 18 9 14C8.800 12 9.500 10.500 10.500 9.700C9 9.300 8 9.300 7 10Z" fill="#124f96" />
          </Svg>
        </TaskCell>
        <TaskCell $w={46}><Running $w={40}>
          <Svg w={23} h={20}>
            <path d="M1 1.500Q1 .5 2 .5H8L10 2.500V7H1Z" fill="#e5a01e" /><path d="M1 4H9L11 2.500H22V18.500H1Z" fill="#fcd265" />
            <path d="M5 19V13Q5 10.500 7.500 10.500H15.500Q18 10.500 18 13V19H14.500V15.500H8.500V19Z" fill="#3f94dc" />
          </Svg>
        </Running></TaskCell>
        <TaskCell $w={51}>
          <Svg w={23} h={24}>
            <path d="M7.500 7V4C7.500 -.3 15.500 -.3 15.500 4V7M10 6V3.500C10 1 17.500 1 17.500 5V6" stroke="#fff" strokeWidth="1.100" />
            <path d="M0 6H23V21Q23 23 21 23H2Q0 23 0 21Z" fill="#fff" />
            <path d="M6 9H11V14H6Z" fill="#f25022" /><path d="M12 9H17V14H12Z" fill="#7fba00" /><path d="M6 15H11V20H6Z" fill="#00a4ef" /><path d="M12 15H17V20H12Z" fill="#ffb900" />
          </Svg>
        </TaskCell>
        <TaskCell $w={48}>
          <Svg w={24} h={20}><path d="M0 6.500L12 0L24 6.500V20H0Z" fill="#fff" /><path d="M1 6.800H23L14.500 11.500L19.500 17L10.500 11.500Z" fill="#00141e" /></Svg>
        </TaskCell>
        <TaskCell $w={50}>
          <Svg w={24} h={24}>
            <circle cx="12" cy="12" r="12" fill="#fbc116" />
            <path d="M1.600 6A12 12 0 0 1 22.400 6H12L7 15Z" fill="#e33b2e" />
            <path d="M1.600 6A12 12 0 0 0 12 24L17.200 15H7Z" fill="#2a9d4a" />
            <path d="M12 6H22.400A12 12 0 0 1 12 24L17.200 15Z" fill="#fbc116" />
            <circle cx="12" cy="12" r="6" fill="#fff" /><circle cx="12" cy="12" r="4.700" fill="#2f7de9" />
          </Svg>
        </TaskCell>
        <TaskCell $w={48} $active><Running $w={48}>
          <Svg w={23} h={23}><path d="M0 0H23V23H0Z" fill="#f4f6f8" /><g transform="translate(1 1)">
            <path d={plus(10.5, 10.5, 4) + plus(10.5, 3, 2) + plus(10.5, 18, 2)} stroke="#4183ad" strokeWidth="1.200" />
            <path d={plus(3, 10.5, 2) + plus(18, 10.5, 2) + plus(5.5, 5.5, 2.3) + plus(15.5, 5.5, 2.3) + plus(5.5, 15.5, 2.3) + plus(15.5, 15.5, 2.3)} stroke="#7fa9c6" strokeWidth="1.200" />
          </g></Svg>
        </Running></TaskCell>
        <Tray>
          <Svg w={24} h={16} stroke="#fff" strokeWidth="1.500"><path d="M1 1H20V15H3Q1 15 1 13ZM20 3.500H23V13Q23 15 21 15H19M4 4.500H17M12 8H17M12 11.500H17M4.500 7.500H9.500V11.500H4.500Z" /></Svg>
          <Text $ml={8} $size={14} $ls={-0.5} $color="#fff">34°C</Text>
          <Text $ml={9} $size={14} $ls={-0.5} $color="#fff">Sunny</Text>
          <TrayIcon $ml={25}><Svg w={12} h={8}><path d="M1 7L6 1.500L11 7" stroke="#fff" strokeWidth="1.300" /></Svg></TrayIcon>
          <TrayIcon $ml={10}><Svg w={17} h={14} stroke="#fff"><path d="M6.500 4.500H14.500V11.500H4.500V9M14.500 6.500H16V9.500H14.500M1.500 1V3M4.500 1V3M.5 3.500H5.500V5.500Q5.500 7 3 7Q.5 7 .5 5.500ZM3 7V9.500" /><path d="M7 6H13V10H7Z" fill="#fff" stroke="none" /></Svg></TrayIcon>
          <TrayIcon $ml={6}><Svg w={17} h={17} stroke="#fff">
            <path d="M9 15.500C4 16 .8 12.500 .8 8.300C.8 4 4 .8 8.300 .8C12.500 .8 15.800 4 15.800 8.500M1 5.500H15.500M1 10.500H9.500M8.300 .8C4.500 4 4.500 12 8 15.500M8.300 .8C11 3 12 6 11.700 9" />
            <circle cx="13" cy="13" r="3.300" /><path d="M10.800 10.800L15.200 15.200" />
          </Svg></TrayIcon>
          <TrayIcon $ml={7}><Svg w={18} h={15} stroke="#fff"><path d="M.6 5.500H3L7 1.500V13.500L3 9.500H.6ZM9 5C10 6 10 9 9 10M11.300 3.500C13.200 5.500 13.200 9.500 11.300 11.500M13.800 1.800C16.700 4.500 16.700 10.500 13.800 13.200" /></Svg></TrayIcon>
          <Text $ml={9} $ls={-0.5} $color="#fff">ENG</Text>
          <Clock><Text $ls={-0.4} $color="#fff">2:33 PM</Text><Text $ls={-0.65} $color="#fff">10/11/2023</Text></Clock>
          <TrayIcon $ml={14} $mt={6}><Svg w={25} h={25}>
            <path d="M0 0H16V13H8L4.500 16V13H0Z" fill="#fff" /><path d="M3 3.500H13M3 6.500H13M3 9.500H9" stroke="#101a28" strokeWidth="1.200" />
            <circle cx="15.500" cy="15" r="8" fill="#35383e" stroke="#85888d" />
            <text x="15.500" y="19.200" fontSize="12" fontWeight="600" textAnchor="middle" fill="#fff" fontFamily="Open Sans, sans-serif">4</text>
          </Svg></TrayIcon>
          <ShowDesktop />
        </Tray>
      </Taskbar>
    </Window>
  );
}
